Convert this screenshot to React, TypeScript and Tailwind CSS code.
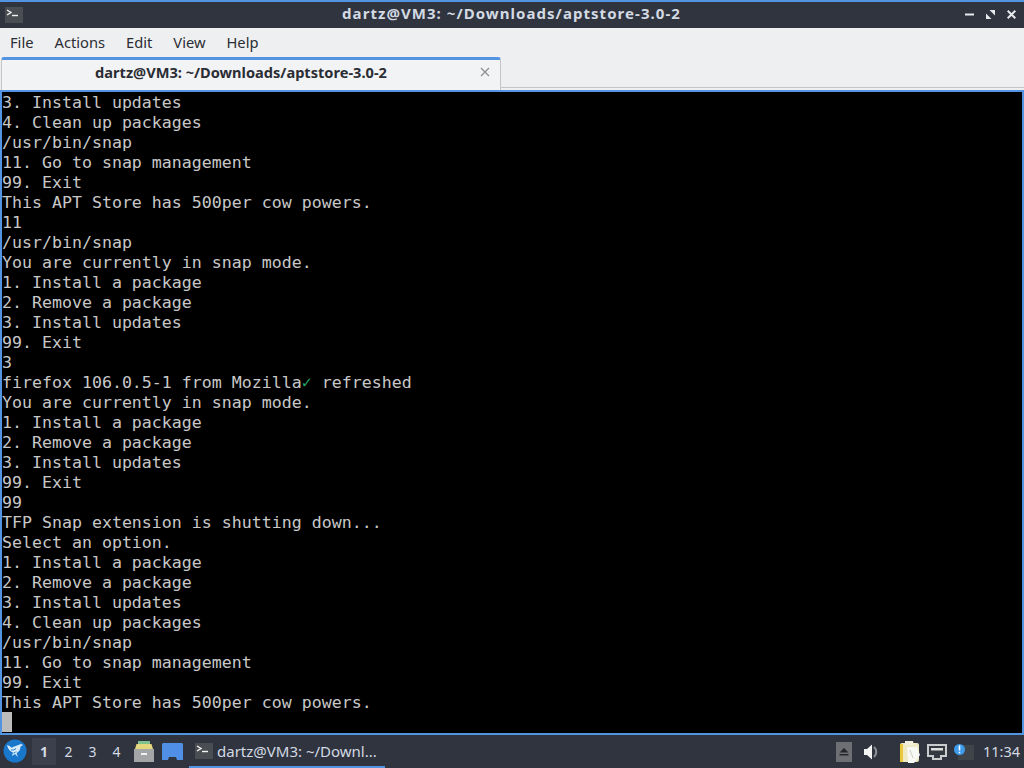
import React from 'react';

const LINES: string[] = [
  '3. Install updates',
  '4. Clean up packages',
  '/usr/bin/snap',
  '11. Go to snap management',
  '99. Exit',
  'This APT Store has 500per cow powers.',
  '11',
  '/usr/bin/snap',
  'You are currently in snap mode.',
  '1. Install a package',
  '2. Remove a package',
  '3. Install updates',
  '99. Exit',
  '3',
  'CHECK',
  'You are currently in snap mode.',
  '1. Install a package',
  '2. Remove a package',
  '3. Install updates',
  '99. Exit',
  '99',
  'TFP Snap extension is shutting down...',
  'Select an option.',
  '1. Install a package',
  '2. Remove a package',
  '3. Install updates',
  '4. Clean up packages',
  '/usr/bin/snap',
  '11. Go to snap management',
  '99. Exit',
  'This APT Store has 500per cow powers.',
];

const TerminalIcon: React.FC<{ className: string }> = ({ className }) => (
  <svg className={className} viewBox="0 0 18 16">
    <rect width="18" height="16" fill="#4a4d52" />
    <path d="M2 3l4 2.5L2 8" fill="none" stroke="#f2f2f2" strokeWidth="1.4" />
    <path d="M7 8.5h6" stroke="#f2f2f2" strokeWidth="1.4" />
  </svg>
);

const TitleBar = () => (
  <div className="h-[26px] bg-[#2f343f] flex items-center pl-[5px] pr-[8px]">
    <div className="w-[70px]">
      <TerminalIcon className="w-[18px] h-[16px]" />
    </div>
    <span className="flex-1 text-center pl-[2px] -mt-[3px] text-[15px] font-bold text-[#d3dae3] tracking-[1.05px]">dartz@VM3: ~/Downloads/aptstore-3.0-2</span>
    <div className="w-[70px] flex items-center justify-end gap-[12px] -mt-px">
      <svg className="w-[9px] h-[9px]" viewBox="0 0 9 9"><path d="M0 4.5h9" stroke="#e6e8ec" strokeWidth="2" /></svg>
      <svg className="w-[9px] h-[9px]" viewBox="0 0 9 9"><path d="M3.5 0H9v5.5zM0 3.5V9h5.5z" fill="#e6e8ec" /></svg>
      <svg className="w-[9px] h-[9px]" viewBox="0 0 9 9"><path d="M.7.7l7.6 7.6M8.3.7L.7 8.3" stroke="#e6e8ec" strokeWidth="2" /></svg>
    </div>
  </div>
);

const MenuBar = () => (
  <div className="h-[29px] bg-[#eeeff1] flex items-center pl-[10px] gap-[21px] text-[14.7px] text-[#2a2d33]">
    <span>File</span>
    <span>Actions</span>
    <span>Edit</span>
    <span>View</span>
    <span>Help</span>
  </div>
);

const TabBar = () => (
  <div className="h-[35px] bg-[#eeeff1] flex items-end border-b-2 border-[#5294e2]">
    <div className="relative w-[500px] h-[33px] ml-px bg-[#f2f3f5] border-t-[3px] border-[#5294e2] border-x border-x-[#c4c5c7] rounded-t-[3px] flex items-center justify-center pr-[20px]">
      <span className="text-[14.6px] -mt-[5px] font-bold text-[#2a2d33]">dartz@VM3: ~/Downloads/aptstore-3.0-2</span>
      <svg className="absolute right-[10px] top-[7px] w-[10px] h-[10px]" viewBox="0 0 10 10">
        <path d="M1 1l8 8M9 1l-8 8" stroke="#8b8d91" strokeWidth="1.2" />
      </svg>
    </div>
    <div className="flex-1 h-[3px] border-t border-[#c4c5c7]" />
  </div>
);

const Terminal = () => (
  <div className="flex-1 bg-black pt-px font-['DejaVu_Sans_Mono',monospace] text-[16.6px] leading-[20px] text-[#c8c8c8] whitespace-pre border-x-2 border-[#5294e2] overflow-hidden">
    {LINES.map((line, i) =>
      line === 'CHECK' ? (
        <div key={i} className="h-[20px]">
          firefox 106.0.5-1 from Mozilla<span className="text-[#26a269]">✓</span> refreshed
        </div>
      ) : (
        <div key={i} className="h-[20px]">{line}</div>
      ),
    )}
    <div className="w-[10px] h-[20px] -mt-px bg-[#bcbcbc]" />
  </div>
);

const Taskbar = () => (
  <div className="h-[33px] bg-[#2f343f] flex items-center text-[#d3dae3]">
    <svg className="w-[24px] h-[24px] ml-[3px] -mt-[2px]" viewBox="0 0 24 24">
      <circle cx="12" cy="12" r="11.5" fill="#1a78cc" />
      <path d="M4 6c2 .5 3.5 1.500 5 3 .5-1 1.500-1.500 2.500-1.500L18 5l2 1-2.500 1.500c0 3-1.500 5.500-4 6.500l1.500 4-3-3-3 2 1-3.500C7 12.500 5 10 4 6z" fill="#d8ebfa" />
      <path d="M8 11c2 0 3.500 0 5-1.500M10.500 14c1 0 2-.5 2.500-1.500" fill="none" stroke="#1a78cc" strokeWidth="1" />
    </svg>
    <div className="flex items-center ml-[5px] text-[14px]">
      <span className="w-[24px] h-[27px] bg-[#3b404c] flex items-center justify-center font-bold">1</span>
      <span className="w-[24px] pl-px text-center">2</span>
      <span className="w-[24px] pl-px text-center">3</span>
      <span className="w-[24px] pl-px text-center">4</span>
    </div>
    <svg className="w-[20px] h-[21px] ml-[6px]" viewBox="0 0 20 21">
      <path d="M4 0h12v3H4z" fill="#7fc08f" />
      <path d="M2.500 3h15L19 8H1z" fill="#e5d77e" />
      <path d="M0 8h20v13H0z" fill="#a3a5a7" />
      <path d="M7 12h6v2H7z" fill="#f2f2f2" />
    </svg>
    <svg className="w-[21px] h-[17px] ml-[8px]" viewBox="0 0 21 17">
      <path d="M1 0h19l1 1v16h-6l-1-3H7l-1 3H0V1z" fill="#4f8fe6" />
    </svg>
    <div className="w-[196px] h-[33px] ml-[6px] flex items-center gap-[4px] pl-[6px] border-b-2 border-[#5294e2] text-[15px]">
      <TerminalIcon className="w-[18px] h-[16px]" />
      <span className="whitespace-nowrap mt-px">dartz@VM3: ~/Downl...</span>
    </div>
    <div className="flex-1" />
    <div className="flex items-center">
      <svg className="w-[16px] h-[20px]" viewBox="0 0 16 20">
        <rect width="16" height="20" fill="#6d6f74" />
        <path d="M8 6l4.500 4.500h-9zM3.500 12h9v1.500h-9z" fill="#24262b" />
      </svg>
      <svg className="w-[16px] h-[16px] ml-[12px]" viewBox="0 0 16 16">
        <path d="M0 5h3l5-4.500v15L3 11H0z" fill="#f4f4f4" />
        <path d="M10 3c3 2.500 3 7.500 0 10" fill="none" stroke="#8e9197" strokeWidth="2" />
      </svg>
      <svg className="w-[20px] h-[22px] ml-[20px]" viewBox="0 0 20 22">
        <rect x="0" y="2" width="19" height="19" rx="2" fill="#efe9c4" />
        <path d="M0 3v18h3V3z" fill="#e9c93b" />
        <path d="M5 0h8l1 4H5z" fill="#f2f0dc" />
        <path d="M7 6h10l3 8-6 8H8z" fill="#f8f8f4" />
        <path d="M10 9l3 8" stroke="#cfcfc4" strokeWidth="1" />
      </svg>
      <svg className="w-[20px] h-[16px] ml-[7px]" viewBox="0 0 20 16">
        <path d="M1 1h18v11h-5v3H6v-3H1z" fill="#34383f" stroke="#c9cbcd" strokeWidth="2" />
        <path d="M4 4h12v2.500H4z" fill="#dedede" />
      </svg>
      <svg className="w-[20px] h-[16px] ml-[7px]" viewBox="0 0 20 16">
        <rect x="4" y="1" width="16" height="15" fill="#3f4449" />
        <circle cx="5.500" cy="5.500" r="5.500" fill="#3d9be9" />
        <path d="M4.700 1.500h1.600v5H4.700zM4.700 7.700h1.600v1.600H4.700z" fill="#ffffff" />
      </svg>
      <span className="w-[45px] ml-[5px] text-center text-[14.5px]">11:34</span>
    </div>
  </div>
);

export default function App() {
  return (
    <div className="w-[1024px] h-[768px] flex flex-col overflow-hidden bg-[#2f343f] border-t-2 border-[#5294e2] font-['Noto_Sans',sans-serif]">
      <TitleBar />
      <MenuBar />
      <TabBar />
      <Terminal />
      <div className="h-[2px] bg-[#5294e2]" />
      <Taskbar />
    </div>
  );
}
